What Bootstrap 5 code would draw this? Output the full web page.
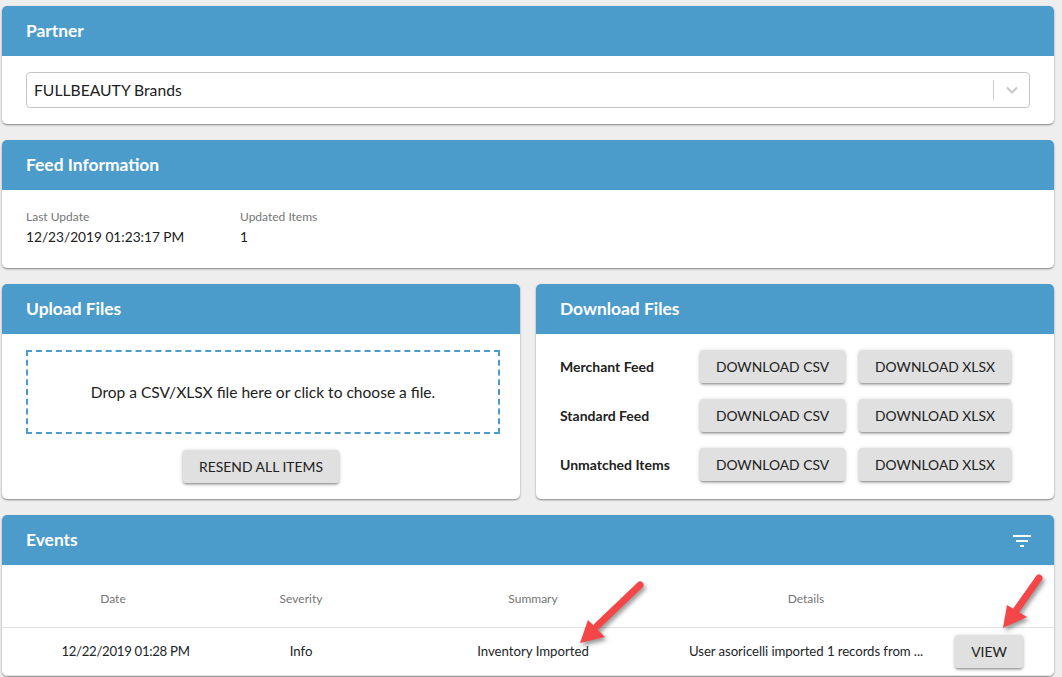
<!DOCTYPE html>
<html lang="en">
<head>
    <meta charset="UTF-8">
    <meta name="viewport" content="width=device-width, initial-scale=1.0">
    <title>Feed Management</title>
    <link href="https://cdn.jsdelivr.net/npm/bootstrap@5.3.0/dist/css/bootstrap.min.css" rel="stylesheet">
    <style>
        * { font-family: Lato, "Liberation Sans", sans-serif; }
        html, body { height: 677px; overflow: hidden; }
        body { background-color: #eeeeee; color: #212121; font-size: 14px; position: relative; }
        .page-wrap { padding: 6px 8px 0 2px; display: flex; flex-direction: column; gap: 16px; }
        .panel-card { background: #fff; border: 0; border-radius: 5px; box-shadow: 0 1px 2px rgba(0,0,0,.45); overflow: hidden; }
        .panel-head { background: #4b9ccb; color: #fff; height: 50px; padding: 0 24px; display: flex; align-items: center; justify-content: space-between; font-size: 17.4px; font-weight: 700; }
        .panel-body { padding: 16px 24px; }
        .fake-select { height: 36px; border: 1px solid #c4c4c4; border-radius: 4px; padding-left: 7px; font-size: 15.7px; display: flex; align-items: center; justify-content: space-between; }
        .select-text { padding-top: 1px; }
        .select-arrow { width: 36px; height: 20px; border-left: 1px solid #ccc; display: flex; align-items: center; justify-content: center; }
        .feed-body { height: 78px; padding-top: 19px; }
        .feed-col { width: 214px; }
        .feed-label { font-size: 12px; color: #757575; line-height: 15px; }
        .feed-value { font-size: 13.7px; line-height: 17px; margin-top: 4px; }
        .files-row { display: flex; gap: 16px; }
        .files-row > .panel-card { flex: 1 1 0; height: 215px; }
        .drop-zone { height: 84px; border: 2px dashed #4b9ccb; font-size: 15.55px; padding-top: 1px; display: flex; align-items: center; justify-content: center; margin: 0 -4px 16px 0; }
        .grey-btn { background: #e0e0e0; color: #212121; border: 0; border-radius: 3px; height: 33px; padding: 0 16px; font-size: 13.9px; line-height: 33px; box-shadow: 0 2px 2px rgba(0,0,0,.16), 0 1px 4px rgba(0,0,0,.22), 0 3px 1px -2px rgba(0,0,0,.14); white-space: nowrap; flex-shrink: 0; }
        .grey-btn:hover { background: #d5d5d5; }
        .dl-row { display: flex; align-items: center; margin-bottom: 16px; }
        .dl-row:last-child { margin-bottom: 0; }
        .dl-label { width: 140px; flex-shrink: 0; font-weight: 700; font-size: 14px; }
        .dl-row .grey-btn { padding: 0; font-size: 13.85px; }
        .dl-csv { width: 145px; }
        .dl-xlsx { width: 152px; margin-left: 14px; }
        .filter-icon { margin: 2px -1px 0 0; }
        .events-table { table-layout: fixed; width: 1052px; margin: 0; font-size: 13.2px; }
        .events-table th { height: 62px; font-weight: 400; font-size: 12px; color: #757575; text-align: center; vertical-align: middle; border-bottom: 1px solid #e0e0e0; padding: 6px 0 0; }
        .events-table td { height: 48px; text-align: center; vertical-align: middle; border-bottom: 1px solid #e0e0e0; padding: 1px 0 0; }
        .col-date { width: 222px; }
        .col-severity { width: 154px; }
        .col-summary { width: 310px; }
        .col-details { width: 236px; }
        .events-table td.date-cell { padding-left: 25px; letter-spacing: -.3px; }
        .events-table td.action-cell { padding: 0; }
        .events-table td.details-cell { white-space: nowrap; letter-spacing: -.07px; }
        .red-arrow { position: absolute; filter: drop-shadow(2px 3px 2px rgba(0,0,0,.4)); }
        .arrow-summary { left: 575px; top: 575px; }
        .arrow-view { left: 995px; top: 570px; }
    </style>
</head>
<body>
    <div class="page-wrap">
        <div class="card panel-card">
            <div class="panel-head">Partner</div>
            <div class="panel-body">
                <div class="fake-select">
                    <span class="select-text">FULLBEAUTY Brands</span>
                    <span class="select-arrow">
                        <svg width="12" height="8" viewBox="0 0 12 8"><path d="M1 1.500 L6 6.500 L11 1.500" fill="none" stroke="#c8c8c8" stroke-width="2"/></svg>
                    </span>
                </div>
            </div>
        </div>

        <div class="card panel-card">
            <div class="panel-head">Feed Information</div>
            <div class="panel-body feed-body d-flex">
                <div class="feed-col">
                    <div class="feed-label">Last Update</div>
                    <div class="feed-value">12/23/2019 01:23:17 PM</div>
                </div>
                <div>
                    <div class="feed-label">Updated Items</div>
                    <div class="feed-value">1</div>
                </div>
            </div>
        </div>

        <div class="files-row">
            <div class="card panel-card">
                <div class="panel-head">Upload Files</div>
                <div class="panel-body">
                    <div class="drop-zone">Drop a CSV/XLSX file here or click to choose a file.</div>
                    <div class="text-center"><button type="button" class="btn grey-btn">RESEND ALL ITEMS</button></div>
                </div>
            </div>
            <div class="card panel-card">
                <div class="panel-head">Download Files</div>
                <div class="panel-body">
                    <div class="dl-row">
                        <div class="dl-label">Merchant Feed</div>
                        <button type="button" class="btn grey-btn dl-csv">DOWNLOAD CSV</button>
                        <button type="button" class="btn grey-btn dl-xlsx">DOWNLOAD XLSX</button>
                    </div>
                    <div class="dl-row">
                        <div class="dl-label">Standard Feed</div>
                        <button type="button" class="btn grey-btn dl-csv">DOWNLOAD CSV</button>
                        <button type="button" class="btn grey-btn dl-xlsx">DOWNLOAD XLSX</button>
                    </div>
                    <div class="dl-row">
                        <div class="dl-label">Unmatched Items</div>
                        <button type="button" class="btn grey-btn dl-csv">DOWNLOAD CSV</button>
                        <button type="button" class="btn grey-btn dl-xlsx">DOWNLOAD XLSX</button>
                    </div>
                </div>
            </div>
        </div>

        <div class="card panel-card">
            <div class="panel-head">
                <span>Events</span>
                <svg class="filter-icon" width="18" height="12" viewBox="0 0 18 12"><path d="M0 0h18v2H0zM3 5h12v2H3zM7 10h4v2H7z" fill="#fff"/></svg>
            </div>
            <table class="table events-table">
                <colgroup>
                    <col class="col-date"><col class="col-severity"><col class="col-summary"><col class="col-details"><col>
                </colgroup>
                <thead>
                    <tr><th>Date</th><th>Severity</th><th>Summary</th><th>Details</th><th></th></tr>
                </thead>
                <tbody>
                    <tr>
                        <td class="date-cell">12/22/2019 01:28 PM</td>
                        <td>Info</td>
                        <td>Inventory Imported</td>
                        <td class="details-cell">User asoricelli imported 1 records from ...</td>
                        <td class="action-cell"><button type="button" class="btn grey-btn">VIEW</button></td>
                    </tr>
                </tbody>
            </table>
        </div>
    </div>

    <svg class="red-arrow arrow-summary" width="72" height="72" viewBox="0 0 72 72">
        <path d="M65 10 L22 51" stroke="#f44548" stroke-width="7" stroke-linecap="round" fill="none"/>
        <path d="M5 68 L13 45 L30 62 Z" fill="#f44548"/>
    </svg>
    <svg class="red-arrow arrow-view" width="54" height="66" viewBox="0 0 54 66">
        <path d="M44 8 L20 42" stroke="#f44548" stroke-width="7" stroke-linecap="round" fill="none"/>
        <path d="M8 58 L12 35 L32 47 Z" fill="#f44548"/>
    </svg>

    <script src="https://cdn.jsdelivr.net/npm/bootstrap@5.3.0/dist/js/bootstrap.bundle.min.js"></script>
</body>
</html>
